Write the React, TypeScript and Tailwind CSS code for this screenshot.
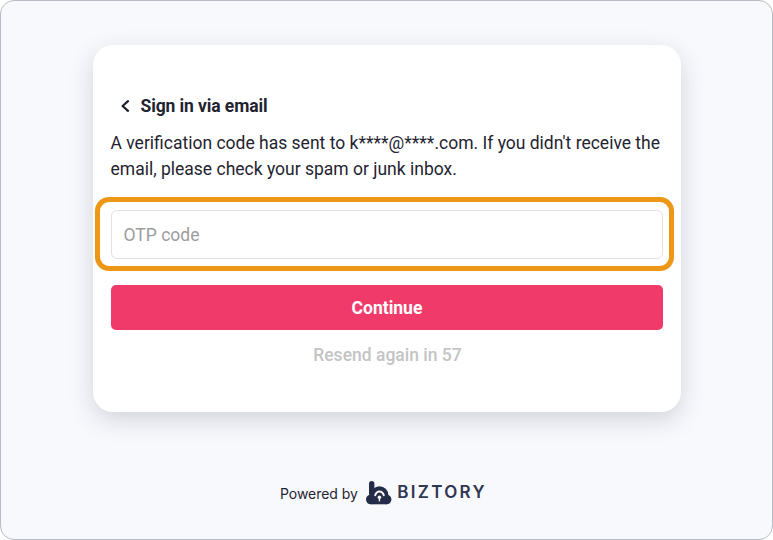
export default function App() {
  return (
    <div className="h-[540px] w-[773px] rounded-[14px] border border-[#b9bbc6] bg-[#f8f9fd] flex flex-col items-center font-['Roboto',sans-serif]">
      <div className="mt-[44px] w-[588px] h-[367px] rounded-[20px] bg-white px-[18px] pt-[49px] shadow-[0_8px_24px_rgba(30,35,60,0.17)]">
        <div className="flex items-center h-[24px] pl-[8px]">
          <svg width="14" height="14" viewBox="0 0 14 14" fill="none" stroke="#1f2430" strokeWidth="2.3" strokeLinecap="round" strokeLinejoin="round">
            <path d="M9 2.2L3.6 7L9 11.8" />
          </svg>
          <span className="ml-[8px] text-[17.5px] leading-[24px] font-bold tracking-[-0.1px] text-[#1f2430]">Sign in via email</span>
        </div>
        <p className="mt-[12px] text-[17.5px] leading-[26px] text-[#1f2430]">
          A verification code has sent to k****@****.com. If you didn't receive the email, please check your spam or junk inbox.
        </p>
        <div className="mt-[15px] -ml-[16px] -mr-[11px] rounded-[14px] border-[5px] border-[#ec9716] pl-[11px] pr-[6px] pt-[8px] pb-[7px]">
          <input
            placeholder="OTP code"
            className="block w-full h-[49px] rounded-[6px] border border-[#e2e2e2] bg-white px-[12px] text-[17.5px] text-[#1f2430] outline-none placeholder:text-[#9c9c9c]"
          />
        </div>
        <button className="mt-[14px] block w-full h-[45px] rounded-[5px] bg-[#f03a69] pt-[1px] pl-[1px] text-[17.5px] font-bold text-white">Continue</button>
        <div className="mt-[13px] pl-[2px] text-center text-[17.5px] leading-[24px] font-medium text-[#c4c4c4]">Resend again in 57</div>
      </div>
      <div className="mt-[68px] pr-[6px] flex items-center h-[26px]">
        <span className="font-['Inter',sans-serif] text-[14px] tracking-[-0.05px] text-[#1f2430]">Powered by</span>
        <svg className="ml-[8.5px]" width="26" height="24" viewBox="0 0 26 24">
          <rect x="3" y="0" width="5.4" height="15" rx="2.7" fill="#252c4a" />
          <circle cx="13.5" cy="14" r="8.8" fill="#252c4a" />
          <circle cx="4.8" cy="18.5" r="4.8" fill="#252c4a" />
          <circle cx="20.6" cy="18.5" r="4.8" fill="#252c4a" />
          <rect x="4.8" y="15" width="16" height="8.3" fill="#252c4a" />
          <path d="M9.2 14.2C10 11.6 11.6 10.4 13.5 10.4C15.4 10.4 17 11.6 17.8 14.2" fill="none" stroke="#f8f9fd" strokeWidth="2" strokeLinecap="round" />
          <circle cx="13.4" cy="16.2" r="1.8" fill="#f8f9fd" />
          <rect x="12.7" y="16.5" width="1.4" height="3.8" fill="#f8f9fd" />
        </svg>
        <span className="ml-[5px] font-['Inter',sans-serif] text-[17px] font-semibold tracking-[2.3px] text-[#2f3650]">BIZTORY</span>
      </div>
    </div>
  );
}
